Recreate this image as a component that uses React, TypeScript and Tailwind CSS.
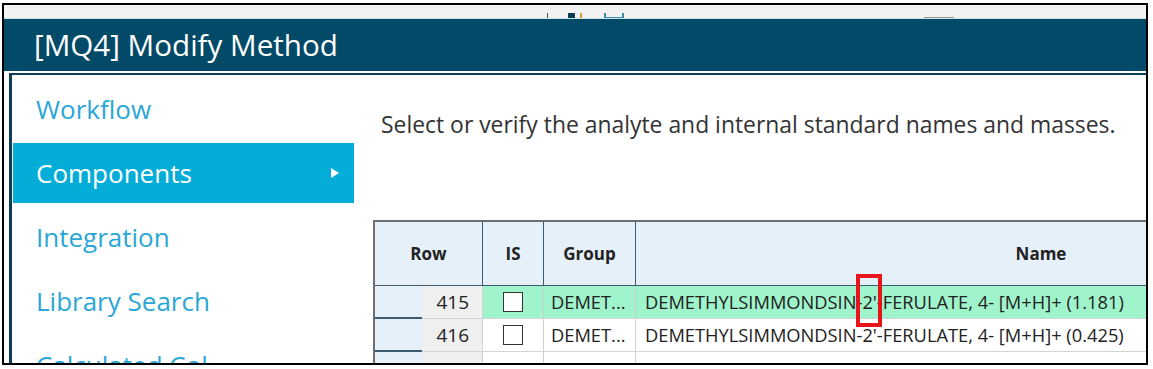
const font = { fontFamily: '"Open Sans", "Noto Sans", sans-serif' }

const navItems = ['Workflow', 'Components', 'Integration', 'Library Search', 'Calculated Col...']

const rows = [
  { n: '415', name: "DEMETHYLSIMMONDSIN-2'-FERULATE, 4- [M+H]+ (1.181)", active: true },
  { n: '416', name: "DEMETHYLSIMMONDSIN-2'-FERULATE, 4- [M+H]+ (0.425)", active: false },
  { n: '', name: '', active: false },
]

function Checkbox() {
  return <div className="w-[20px] h-[20px] bg-white border-[1.5px] border-[#333]" />
}

export default function App() {
  return (
    <div className="w-[1153px] h-[369px] bg-white overflow-hidden pt-[3px] pl-[2px]" style={font}>
      <div className="w-[1146px] h-[362px] border-2 border-black flex flex-col overflow-hidden">
        {/* glimpse of window behind */}
        <div className="h-[13px] bg-[#f2f2f2] flex items-end shrink-0">
          <div className="ml-[543px] w-px h-[5px] bg-[#555]" />
          <div className="ml-[20px] w-[7px] h-[5px] bg-[#0d3b52]" />
          <div className="ml-[5px] w-[2px] h-[5px] bg-[#d9a23a]" />
          <div className="ml-[22px] w-[20px] h-[5px] border-x-2 border-b border-[#3b8fa6]" />
          <div className="ml-[300px] w-[30px] h-px bg-[#999]" />
        </div>
        <div className="h-px bg-[#cfe3ea] shrink-0" />
        <div className="h-[52px] bg-[#024a68] flex items-center pl-[30px] shrink-0">
          <span className="text-white text-[29.6px] leading-none pb-[1px]">[MQ4] Modify Method</span>
        </div>
        <div className="h-[2px] bg-white shrink-0" />
        <div className="flex-1 flex ml-[5px] border-l-[3px] border-t-[2px] border-[#0b3f58] min-h-0">
          {/* nav */}
          <div className="w-[342px] pl-px pt-[4px] flex flex-col gap-[4px] shrink-0">
            {navItems.map((item) => {
              const active = item === 'Components'
              return (
                <div
                  key={item}
                  className={
                    'h-[60px] shrink-0 flex items-center justify-between pl-[23px] pr-[14px] text-[26px] ' +
                    (active ? 'bg-[#04acd8] text-white' : 'text-[#2ba6d6]')
                  }
                >
                  <span>{item}</span>
                  {active && (
                    <svg width="10" height="12" viewBox="0 0 10 12">
                      <path d="M1 1L9 6L1 11Z" fill="white" />
                    </svg>
                  )}
                </div>
              )
            })}
          </div>
          {/* content */}
          <div className="flex-1 flex flex-col pl-[19px] min-w-0">
            <div className="h-[145px] pl-[8px] pt-[35px] text-[22.9px] text-[#333] shrink-0 leading-[30px] whitespace-nowrap">
              Select or verify the analyte and internal standard names and masses.
            </div>
            <div className="border-t-2 border-l-2 border-[#6f6f6f] w-[1100px] text-[#222] shrink-0">
              <div className="flex h-[64px] bg-[#e6f0f8] font-bold text-[17px] border-b border-[#3c5b71]">
                <div className="w-[108px] flex items-center justify-center border-r border-[#3c5b71]">Row</div>
                <div className="w-[61px] flex items-center justify-center border-r border-[#3c5b71]">IS</div>
                <div className="w-[92px] flex items-center justify-center border-r border-[#3c5b71]">Group</div>
                <div className="w-[810px] flex items-center justify-center">Name</div>
              </div>
              {rows.map((r, i) => (
                <div key={i} className="flex h-[33px] text-[18.3px]">
                  <div className="w-[47px] bg-[#e6f0f8] border-b-2 border-[#3c5b71]" />
                  <div className="w-[61px] bg-[#efefef] border-b border-r border-[#d4d4d4] flex items-center justify-end pr-[13px] text-[19px]">
                    {r.n}
                  </div>
                  <div
                    className={
                      'flex flex-1 border-b border-[#d4d4d4] ' + (r.active ? 'bg-[#a0f4cb]' : 'bg-white')
                    }
                  >
                    <div className="w-[61px] flex items-center justify-center border-r border-[#cfcfcf]">
                      {r.n && <Checkbox />}
                    </div>
                    <div className="w-[92px] flex items-center pl-[7px] border-r border-[#cfcfcf]">
                      {r.n && 'DEMET...'}
                    </div>
                    <div className="flex-1 flex items-center pl-[9px] whitespace-nowrap">
                      {r.active ? (
                        <>
                          DEMETHYLSIMMONDSIN-
                          <span className="relative">
                            2'
                            <span className="absolute -left-[6px] -right-[5px] -top-[14px] -bottom-[11px] border-[4px] border-[#e8141c]" />
                          </span>
                          -FERULATE, 4- [M+H]+ (1.181)
                        </>
                      ) : (
                        r.name
                      )}
                    </div>
                  </div>
                </div>
              ))}
            </div>
          </div>
        </div>
      </div>
    </div>
  )
}
